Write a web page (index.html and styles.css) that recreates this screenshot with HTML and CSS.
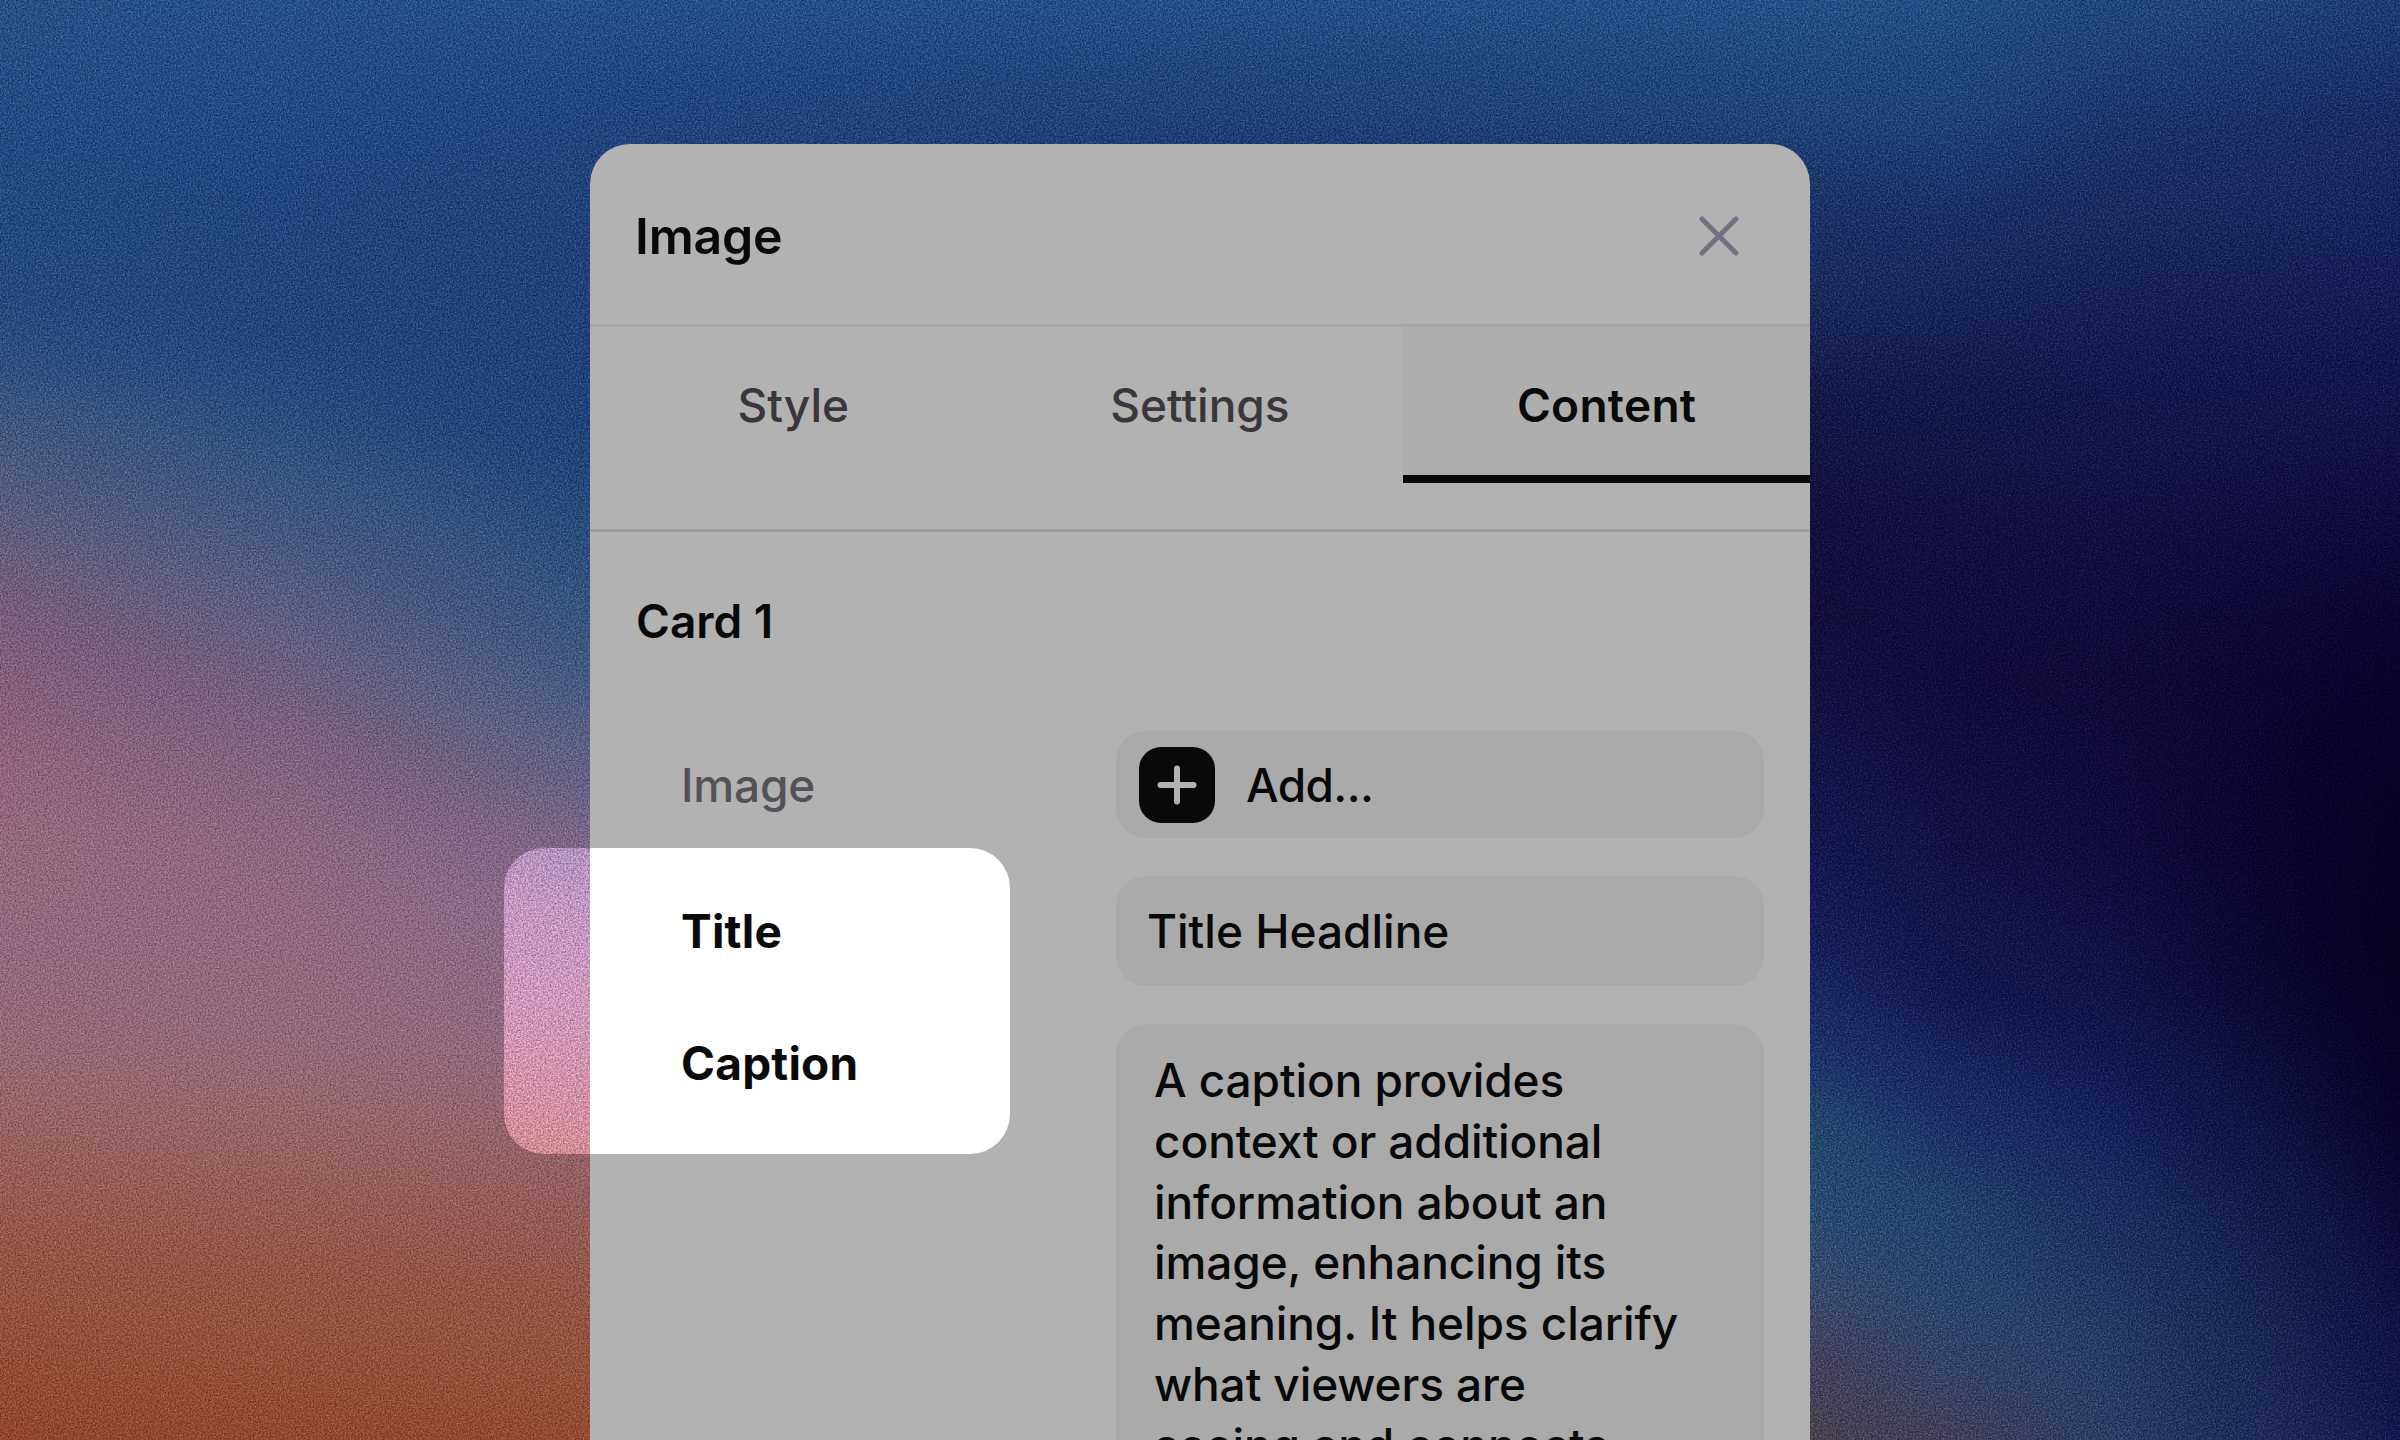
FILE: index.html
```html
<!DOCTYPE html>
<html lang="en">
	<head>
		<meta charset="utf-8">
		<title>Image</title>
		<link rel="stylesheet" href="styles.css">
	</head>
	<body>
		<div class="stage">
			<!-- wallpaper: vertical gradients that fade into each other from left to right -->
			<div class="wallpaper">
				<div class="band band1"></div>
				<div class="band band2"></div>
				<div class="band band3"></div>
				<div class="band band4"></div>
				<div class="band band5"></div>
				<div class="band band6"></div>
				<div class="band band7"></div>
				<div class="band band8"></div>
				<svg class="grain" width="2400" height="1440">
					<filter id="noise" x="0" y="0" width="100%" height="100%" color-interpolation-filters="sRGB">
						<feTurbulence type="fractalNoise" baseFrequency="0.6" numOctaves="2" seed="4"/>
						<feColorMatrix values="1.8 0 0 0 -0.4  1.8 0 0 0 -0.4  1.8 0 0 0 -0.4  0 0 0 0 1"/>
					</filter>
					<rect width="2400" height="1440" filter="url(#noise)"/>
				</svg>
			</div>

			<div class="panel">
				<div class="header">
					<h1>Image</h1>
					<svg class="close" width="40" height="40" viewBox="0 0 40 40">
						<path d="M3 3L37 37M37 3L3 37"/>
					</svg>
				</div>
				<div class="tabs">
					<div class="tab">Style</div>
					<div class="tab">Settings</div>
					<div class="tab active">Content</div>
				</div>
				<div class="content">
					<h2>Card 1</h2>
					<div class="form">
						<div class="label">Image</div>
						<div class="field add">
							<span class="plus">
								<svg width="40" height="40" viewBox="0 0 40 40">
									<path d="M20 3.500V36.500M3.500 20H36.500"/>
								</svg>
							</span>
							<span>Add...</span>
						</div>
						<div class="label strong">Title</div>
						<div class="field title">Title Headline</div>
						<div class="label strong caption-label">Caption</div>
						<div class="field caption">A caption provides<br>context or additional<br>information about an<br>image, enhancing its<br>meaning. It helps clarify<br>what viewers are<br>seeing and connects</div>
					</div>
				</div>
			</div>

			<!-- everything outside of the spotlight is dimmed by its shadow -->
			<div class="spotlight"></div>
		</div>
	</body>
</html>
```
FILE: styles.css
```css
*{
	margin: 0;
	padding: 0;
	box-sizing: border-box;
}
body{
	font-family: Inter, "Liberation Sans", sans-serif;
	font-size: 46px;
	font-weight: 500;
	color: #0d0d0e;
}
.stage{
	position: relative;
	width: 2400px;
	height: 1440px;
	overflow: hidden;
}

/* wallpaper */
.wallpaper{
	position: absolute;
	inset: 0;
	filter: brightness(1.4286);
}
.band{
	position: absolute;
	inset: 0;
}
.band1{
	background: linear-gradient(#27508a 0, #234a86 150px, #254a7e 300px, #2f5080 370px, #455a80 440px, #5b5d80 510px, #745f7e 590px, #875f7b 670px, #92647c 760px, #976a7e 850px, #966a80 950px, #976a78 1040px, #986466 1120px, #985c50 1200px, #96503c 1310px, #94462e 1440px);
}
.band2{
	background: linear-gradient(#264f8b 0, #214582 200px, #214580 340px, #294f7d 430px, #3d5882 510px, #555c84 590px, #6c6084 670px, #80637f 750px, #8e6780 840px, #946a80 940px, #956a7c 1040px, #97666a 1120px, #965e54 1200px, #96533f 1310px, #94482f 1440px);
	mask-image: linear-gradient(to right, transparent 0, #000 300px);
}
.band3{
	background: linear-gradient(#254f8b 0, #214684 100px, #1f3f79 250px, #1f417a 420px, #264b7b 520px, #33547f 610px, #465c84 690px, #5f6186 760px, #786688 830px, #88698a 900px, #906b84 1000px, #946575 1110px, #965f60 1190px, #955644 1300px, #944a30 1440px);
	mask-image: linear-gradient(to right, transparent 300px, #000 590px);
}
.band4{
	background: linear-gradient(#254f8b 0, #1d3c76 144px, #18265e 400px);
	mask-image: linear-gradient(to right, transparent 590px, #000 1200px);
}
.band5{
	background: linear-gradient(#24508a 0, #1f447e 100px, #1b3468 200px, #18285c 300px, #14184a 400px, #120f3e 500px, #120d3b 620px, #13144c 800px, #162058 950px, #1b3069 1040px, #234870 1130px, #294c76 1220px, #3a496c 1300px, #463f60 1360px, #48434f 1440px);
	mask-image: linear-gradient(to right, transparent 1200px, #000 1810px);
}
.band6{
	background: linear-gradient(#234e88 0, #1d4079 120px, #182b60 250px, #141a4c 380px, #120f3e 520px, #100b3a 680px, #121042 850px, #14184f 1000px, #1a2d66 1110px, #21406a 1200px, #27466e 1290px, #35446a 1370px, #443e5c 1440px);
	mask-image: linear-gradient(to right, transparent 1810px, #000 1950px);
}
.band7{
	background: linear-gradient(#204682 0, #1b366c 120px, #172458 260px, #14164c 400px, #110e3f 540px, #0f0a37 680px, #100b3c 850px, #111246 1000px, #15205a 1120px, #1b2f60 1220px, #223b64 1330px, #293d65 1440px);
	mask-image: linear-gradient(to right, transparent 1950px, #000 2110px);
}
.band8{
	background: linear-gradient(#1c3b76 0, #182a62 130px, #151b54 300px, #110f44 450px, #0b0530 620px, #070124 800px, #06001f 950px, #09042a 1120px, #0e0c3c 1260px, #14184e 1440px);
	mask-image: linear-gradient(to right, transparent 2110px, #000 2400px);
}
.grain{
	position: absolute;
	inset: 0;
	mix-blend-mode: soft-light;
	opacity: 0.5;
}

/* panel */
.panel{
	position: relative;
	width: 1220px;
	height: 1400px;
	margin: 144px auto 0;
	background: #fff;
	border-radius: 40px 40px 0 0;
	overflow: hidden;
}
.header{
	display: flex;
	align-items: center;
	justify-content: space-between;
	height: 183px;
	padding: 3px 71px 0 45px;
	border-bottom: 3px solid #efefef;
}
h1{
	font-size: 50px;
	font-weight: 600;
	line-height: 60px;
	letter-spacing: -0.2px;
}
.close{
	fill: none;
	stroke: #a8a3b8;
	stroke-width: 5;
	stroke-linecap: round;
}
.tabs{
	display: grid;
	grid-template-columns: repeat(3, 1fr);
	height: 205px;
	padding-bottom: 46px;
	border-bottom: 3px solid #e2e2e2;
}
.tab{
	padding-top: 48px;
	line-height: 60px;
	text-align: center;
	color: #544e57;
}
.tab.active{
	background: #f9f9f9;
	border-bottom: 8px solid #0d0d0e;
	font-weight: 600;
	letter-spacing: 0.3px;
	color: #0d0d0e;
}
.content{
	padding: 59px 45px 0;
}
h2{
	padding-left: 1px;
	font-size: 46px;
	font-weight: 600;
	line-height: 60px;
}
.form{
	display: grid;
	grid-template-columns: 435px 648px;
	row-gap: 38px;
	margin-top: 80px;
	padding-left: 46px;
}
.label{
	align-self: center;
	line-height: 60px;
	letter-spacing: -0.2px;
	color: #79757e;
}
.label.strong{
	font-weight: 700;
	letter-spacing: 0.2px;
	color: #0a0a0a;
}
.label.caption-label{
	align-self: start;
	padding-top: 9px;
}
.field{
	background: #f4f4f4;
	border-radius: 30px;
}
.add{
	display: flex;
	align-items: center;
	gap: 31px;
	height: 107px;
	padding-left: 23px;
	letter-spacing: -0.6px;
}
.plus{
	display: flex;
	align-items: center;
	justify-content: center;
	width: 76px;
	height: 76px;
	border-radius: 22px;
	background: #0d0d0e;
}
.plus svg{
	stroke: #fff;
	stroke-width: 6;
	stroke-linecap: round;
}
.title{
	height: 110px;
	padding-left: 31px;
	line-height: 111px;
}
.caption{
	height: 500px;
	padding: 26px 0 0 38px;
	line-height: 60.8px;
	letter-spacing: -0.1px;
	white-space: nowrap;
}

.spotlight{
	position: absolute;
	left: 504px;
	top: 848px;
	width: 506px;
	height: 306px;
	border-radius: 40px;
	box-shadow: 0 0 0 2400px rgba(0, 0, 0, 0.3);
}
```
